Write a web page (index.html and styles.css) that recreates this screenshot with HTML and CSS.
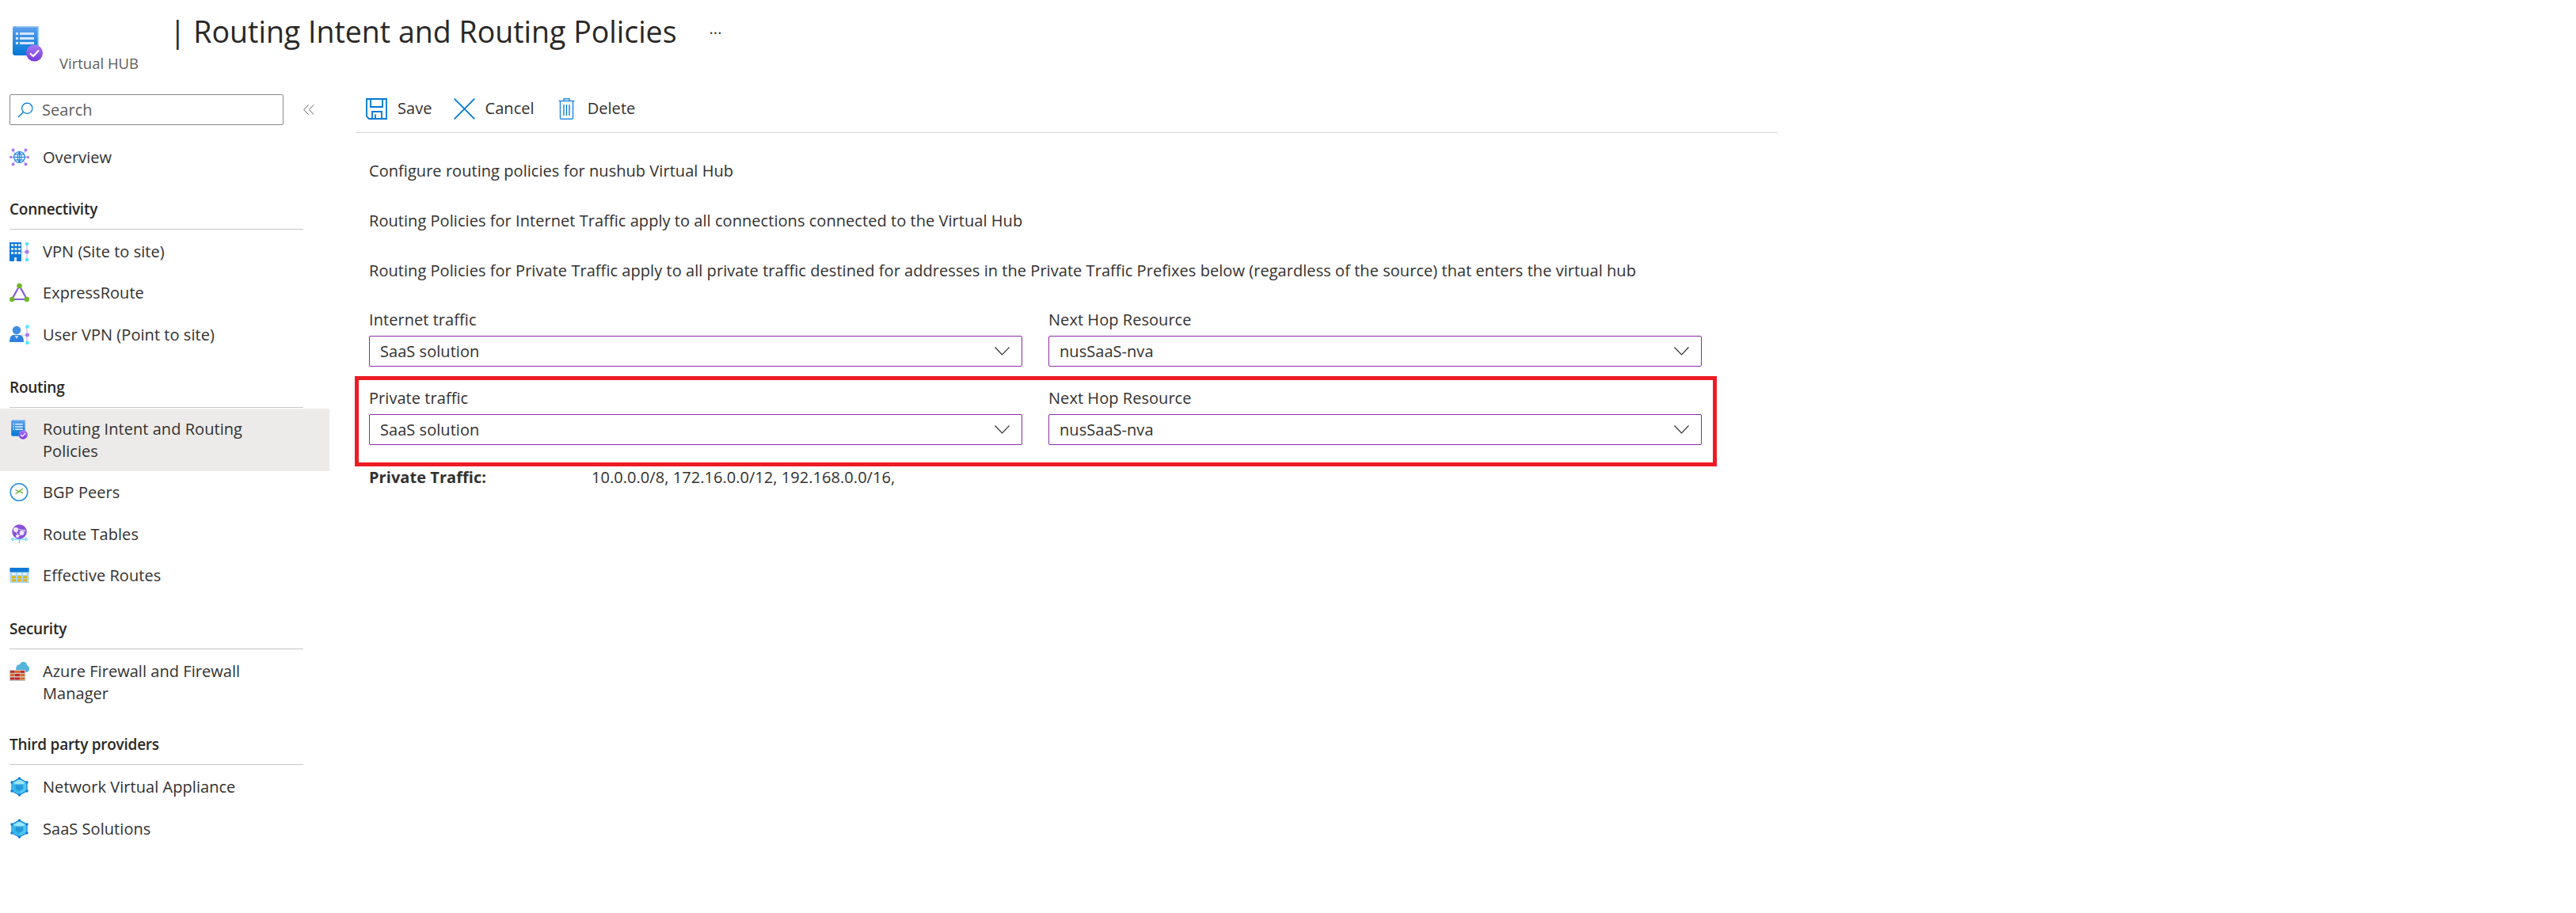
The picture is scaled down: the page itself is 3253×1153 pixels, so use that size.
FILE: index.html
```html
<!DOCTYPE html>
<html lang="en">
<head>
<meta charset="utf-8">
<title>Routing Intent and Routing Policies</title>
<link rel="stylesheet" href="styles.css">
</head>
<body>
<svg class="defs" width="0" height="0" aria-hidden="true">
  <defs>
    <linearGradient id="bookG" x1="0" y1="0" x2="0" y2="1"><stop offset="0" stop-color="#5ea0ef"/><stop offset="1" stop-color="#0078d4"/></linearGradient>
    <linearGradient id="checkG" x1="0" y1="0" x2="0" y2="1"><stop offset="0" stop-color="#a67af4"/><stop offset="1" stop-color="#773adc"/></linearGradient>
    <symbol id="book" viewBox="0 0 38 46">
      <path d="M3 1 H33 V38 H3 Q0 38 0 35 V4 Q0 1 3 1Z" fill="url(#bookG)"/>
      <path d="M3 1 H33 V38 H31.5 V2.500 H4.500 Z" fill="#9fcdf5"/>
      <g fill="#d4e6fa"><rect x="4" y="9" width="3" height="3"/><rect x="9" y="9" width="18" height="3"/><rect x="4" y="15" width="3" height="3"/><rect x="9" y="15" width="18" height="3"/><rect x="4" y="21" width="3" height="3"/><rect x="9" y="21" width="18" height="3"/></g>
      <circle cx="27.500" cy="35" r="10.500" fill="url(#checkG)"/>
      <path d="M22 35.500 L26 39 L33 31.500" fill="none" stroke="#fff" stroke-width="2.200"/>
    </symbol>
    <symbol id="cube" viewBox="0 0 25 25">
      <path d="M12.500 2 L22 7 V18 L12.500 23 L3 18 V7Z" fill="#50c7ee" stroke="#0f7fe0" stroke-width="1.200"/>
      <path d="M12.500 3.500 L20 7.500 L12.500 11.500 L5 7.500Z" fill="#9ce6f8"/>
      <path d="M5 9 L12.500 13 V21 L5 17Z" fill="#32b4e4"/>
      <path d="M8 9.500 L17 9.500 L17.500 15 L12.500 18 L8 15Z" fill="#1a8fd6" opacity=".8"/>
      <g fill="#0f78dc"><circle cx="12.500" cy="2" r="1.700"/><circle cx="22" cy="7" r="1.700"/><circle cx="22" cy="18" r="1.700"/><circle cx="12.500" cy="23" r="1.700"/><circle cx="3" cy="18" r="1.700"/><circle cx="3" cy="7" r="1.700"/></g>
    </symbol>
    <symbol id="chev" viewBox="0 0 19 11"><path d="M.5 .5 L9.500 10 L18.500 .5" fill="none" stroke="#323130" stroke-width="1.200"/></symbol>
  </defs>
</svg>

<header class="page-head">
  <svg class="head-icon"><use href="#book"/></svg>
  <h1 class="title">| Routing Intent and Routing Policies</h1>
  <span class="more">···</span>
  <div class="subtitle">Virtual HUB</div>
</header>

<div class="app">
  <nav class="sidebar">
    <div class="search-row">
      <div class="search">
        <svg class="search-icon" viewBox="0 0 22 22"><circle cx="13.500" cy="8.500" r="7.300" fill="none" stroke="#0078d4" stroke-width="1.300"/><path d="M8.300 13.700 L1 21" stroke="#0078d4" stroke-width="1.500"/></svg>
        <span class="placeholder">Search</span>
      </div>
      <svg class="collapse" viewBox="0 0 14 13"><path d="M6.500 .5 L.8 6.500 L6.500 12.500 M13 .5 L7.300 6.500 L13 12.500" fill="none" stroke="#605e5c" stroke-width="1"/></svg>
    </div>

    <a class="item first">
      <svg class="ico" viewBox="0 0 25 25">
        <g stroke="#b796f9" stroke-width="1"><path d="M4 4 L21 21 M21 4 L4 21 M1 12.500 H24"/></g>
        <g fill="#a67af4"><circle cx="4.500" cy="3.500" r="2"/><circle cx="20.500" cy="3.500" r="2"/><circle cx="4.500" cy="21.500" r="2"/><circle cx="20.500" cy="21.500" r="2"/><circle cx="1.800" cy="12.500" r="1.800"/><circle cx="23.200" cy="12.500" r="1.800"/></g>
        <circle cx="12.500" cy="12.500" r="7" fill="#e6f2fc" stroke="#1a7fe0" stroke-width="1.200"/>
        <path d="M5.500 12.500 H19.500 M6.500 9 H18.500 M6.500 16 H18.500 M12.500 5.500 V19.500 M12.500 5.500 Q7.500 12.500 12.500 19.500 M12.500 5.500 Q17.500 12.500 12.500 19.500" fill="none" stroke="#1a7fe0" stroke-width="1"/>
      </svg>
      <span>Overview</span>
    </a>

    <h2 class="section">Connectivity</h2>
    <a class="item">
      <svg class="ico" viewBox="0 0 25 25">
        <path d="M0 1 H15 V25 H0Z" fill="#0f78d8"/>
        <g fill="#d8ecfc"><rect x="2" y="3" width="3" height="3"/><rect x="6.500" y="3" width="3" height="3"/><rect x="11" y="3" width="3" height="3"/><rect x="2" y="8" width="3" height="3"/><rect x="6.500" y="8" width="3" height="3"/><rect x="11" y="8" width="3" height="3"/><rect x="2" y="13" width="3" height="3"/><rect x="6.500" y="13" width="3" height="3"/><rect x="11" y="13" width="3" height="3"/><rect x="6" y="20" width="3" height="5"/></g>
        <path d="M15 13 H22 M22 3 V22" stroke="#c3c1d6" stroke-width="1.200"/>
        <circle cx="22" cy="3" r="2.300" fill="#50e6ff"/><circle cx="22" cy="13" r="2.500" fill="#a67af4"/><circle cx="22" cy="23" r="2.300" fill="#50e6ff"/>
      </svg>
      <span>VPN (Site to site)</span>
    </a>
    <a class="item">
      <svg class="ico" viewBox="0 0 25 25">
        <path d="M12.500 4 L3 21 H22Z" fill="none" stroke="#8c5be0" stroke-width="2.200"/>
        <circle cx="12.500" cy="4" r="3.300" fill="#6fb82a"/><circle cx="3.200" cy="21" r="3.200" fill="#6fb82a"/><circle cx="21.800" cy="21" r="3.200" fill="#6fb82a"/>
      </svg>
      <span>ExpressRoute</span>
    </a>
    <a class="item">
      <svg class="ico" viewBox="0 0 25 25">
        <path d="M15 13 H22 M22 2 V22" stroke="#c3c1d6" stroke-width="1.200"/>
        <circle cx="9" cy="7" r="5.300" fill="#3f8fe6"/>
        <path d="M0 22 Q0 13.500 5 13 H13 Q18 13.500 18 22Z" fill="#2f80e0"/>
        <path d="M6.500 14 L9 18 L11.500 14Z" fill="#bcdcf8"/>
        <circle cx="22.500" cy="2.500" r="2.300" fill="#50e6ff"/><circle cx="22.500" cy="13" r="2.500" fill="#a67af4"/><circle cx="22.500" cy="23" r="2.300" fill="#50e6ff"/>
      </svg>
      <span>User VPN (Point to site)</span>
    </a>

    <h2 class="section flush">Routing</h2>
    <a class="item wrap selected">
      <svg class="ico book-small"><use href="#book"/></svg>
      <span>Routing Intent and Routing Policies</span>
    </a>
    <a class="item">
      <svg class="ico" viewBox="0 0 25 25">
        <circle cx="12" cy="12.500" r="10.800" fill="#fff" stroke="#2a8fe0" stroke-width="1.500"/>
        <path d="M7.500 9.500 L12 12 L7.500 14.500" fill="none" stroke="#59a82a" stroke-width="1.200"/>
        <path d="M17 8 L12.500 11 L17 14" fill="none" stroke="#59a82a" stroke-width="1.200"/>
      </svg>
      <span>BGP Peers</span>
    </a>
    <a class="item">
      <svg class="ico" viewBox="0 0 25 25">
        <path d="M4 19 H21 M12.500 17 V24 M2 19 L5 17 M2 19 L5 21 M23 19 L20 17 M23 19 L20 21" stroke="#6fdcf8" stroke-width="1.500" fill="none"/>
        <circle cx="12.500" cy="9.500" r="9.300" fill="#8a52dc"/>
        <path d="M5 5 L20 8 L12 15 Z" fill="none" stroke="#e2d4fa" stroke-width="1"/>
        <circle cx="15.500" cy="11" r="3" fill="#efe8fc"/><circle cx="8" cy="7" r="3" fill="#efe8fc"/><circle cx="10" cy="15" r="2" fill="#efe8fc"/>
      </svg>
      <span>Route Tables</span>
    </a>
    <a class="item">
      <svg class="ico" viewBox="0 0 25 25">
        <rect x="0.500" y="3" width="24" height="19" fill="#a9d4f5"/>
        <rect x="0.500" y="3" width="24" height="5.500" fill="#0f78d8"/>
        <g fill="#eef4fb"><rect x="3" y="9.500" width="5" height="2.500"/><rect x="10" y="9.500" width="5" height="2.500"/><rect x="17" y="9.500" width="5" height="2.500"/></g>
        <g fill="#e3b500"><rect x="3" y="13.500" width="5" height="2.800"/><rect x="10" y="13.500" width="5" height="2.800"/><rect x="17" y="13.500" width="5" height="2.800"/><rect x="3" y="17.500" width="5" height="3"/><rect x="10" y="17.500" width="5" height="3"/><rect x="17" y="17.500" width="5" height="3"/></g>
      </svg>
      <span>Effective Routes</span>
    </a>

    <h2 class="section">Security</h2>
    <a class="item wrap">
      <svg class="ico" viewBox="0 0 25 25">
        <path d="M8 11 Q8 4 13 4 Q15 0 19 1 Q22 2 22 5 Q25 6 25 10 Q25 14 20 14 H8Z" fill="#55b3dc"/>
        <rect x="0" y="11" width="20" height="14" fill="#c8c6c4"/>
        <g fill="#c3262b"><rect x="1" y="12" width="5.500" height="2.800"/><rect x="13.500" y="12" width="5.500" height="2.800"/><rect x="1" y="20.500" width="5.500" height="3"/><rect x="7" y="20.500" width="6" height="3"/><rect x="7" y="16" width="6" height="3"/></g>
        <g fill="#e06a1e"><rect x="7" y="12" width="6" height="2.800"/><rect x="1" y="16" width="5.500" height="3"/><rect x="13.500" y="16" width="5.500" height="3"/><rect x="13.500" y="20.500" width="5.500" height="3"/></g>
      </svg>
      <span>Azure Firewall and Firewall Manager</span>
    </a>

    <h2 class="section">Third party providers</h2>
    <a class="item">
      <svg class="ico"><use href="#cube"/></svg>
      <span>Network Virtual Appliance</span>
    </a>
    <a class="item">
      <svg class="ico"><use href="#cube"/></svg>
      <span>SaaS Solutions</span>
    </a>
  </nav>

  <main class="main">
    <div class="toolbar">
      <button class="tool">
        <svg class="tool-ico" viewBox="0 0 27 27"><path d="M1 1 H26 V26 H4 L1 23Z M6 1 V11 H21 V1 M8 26 V17 H20 V26 M12 20.500 V26" fill="none" stroke="#0078d4" stroke-width="1.800"/></svg>
        <span>Save</span>
      </button>
      <button class="tool">
        <svg class="tool-ico" viewBox="0 0 27 27"><path d="M.7 .7 L26.300 26.300 M26.300 .7 L.7 26.300" fill="none" stroke="#0078d4" stroke-width="1.700"/></svg>
        <span>Cancel</span>
      </button>
      <button class="tool">
        <svg class="tool-ico trash" viewBox="0 0 21 27"><path d="M.5 3.500 H20.500 M7 3.500 V.8 H14 V3.500 M2.500 3.500 V25 Q2.500 26.300 4 26.300 H17 Q18.500 26.300 18.500 25 V3.500" fill="none" stroke="#2a8de0" stroke-width="1.500"/><path d="M7 8 V22 M10.500 8 V22 M14 8 V22" stroke="#0078d4" stroke-width="1.300"/></svg>
        <span>Delete</span>
      </button>
    </div>

    <p class="para">Configure routing policies for nushub Virtual Hub</p>
    <p class="para">Routing Policies for Internet Traffic apply to all connections connected to the Virtual Hub</p>
    <p class="para">Routing Policies for Private Traffic apply to all private traffic destined for addresses in the Private Traffic Prefixes below (regardless of the source) that enters the virtual hub</p>

    <section class="form-row plain">
      <div class="field">
        <label class="label">Internet traffic</label>
        <div class="select"><span>SaaS solution</span><svg class="chev"><use href="#chev"/></svg></div>
      </div>
      <div class="field">
        <label class="label">Next Hop Resource</label>
        <div class="select"><span>nusSaaS-nva</span><svg class="chev"><use href="#chev"/></svg></div>
      </div>
    </section>

    <section class="form-row marked">
      <div class="field">
        <label class="label">Private traffic</label>
        <div class="select"><span>SaaS solution</span><svg class="chev"><use href="#chev"/></svg></div>
      </div>
      <div class="field">
        <label class="label">Next Hop Resource</label>
        <div class="select"><span>nusSaaS-nva</span><svg class="chev"><use href="#chev"/></svg></div>
      </div>
    </section>

    <div class="prefixes">
      <strong class="prefix-key">Private Traffic:</strong>
      <span>10.0.0.0/8, 172.16.0.0/12, 192.168.0.0/16,</span>
    </div>
  </main>
</div>
</body>
</html>
```
FILE: styles.css
```css
* { box-sizing: border-box; }
html, body { margin: 0; padding: 0; background: #fff; }
body {
  font-family: "Open Sans", "Noto Sans", "Liberation Sans", sans-serif;
  font-size: 20px;
  line-height: 28px;
  color: #323130;
  letter-spacing: 0.05px;
  width: 3253px;
  height: 1153px;
  overflow: hidden;
}
.defs { position: absolute; }

.page-head {
  display: grid;
  grid-template-columns: 59px 139px auto auto 1fr;
  grid-template-rows: 70px 28px;
  height: 98px;
  padding-left: 16px;
}
.head-icon { grid-row: 1 / 3; width: 38px; height: 46px; margin-top: 32px; grid-column: 1; }
.title {
  grid-column: 3; grid-row: 1;
  margin: 16px 0 0;
  font-size: 37.5px; font-weight: 400; line-height: 48px; color: #292827;
  letter-spacing: 0;
}
.more { grid-column: 4; grid-row: 1; margin: 28px 0 0 41px; font-size: 20px; line-height: 28px; }
.subtitle { grid-column: 2 / 4; grid-row: 2; font-size: 18.5px; letter-spacing: 0; color: #605e5c; line-height: 20px; }

.app { display: flex; }
.sidebar { width: 416px; flex: none; }
.search-row { display: flex; align-items: center; padding: 21px 0 0 12px; }
.search {
  width: 346px; height: 39px;
  display: flex; align-items: center; gap: 11px;
  padding-left: 9px;
  border: 1px solid #8a8886; border-radius: 2px;
  color: #605e5c;
}
.search-icon { width: 20px; height: 20px; }
.collapse { width: 14px; height: 13px; margin-left: 25px; }

.item {
  display: flex; align-items: flex-start; gap: 17px;
  padding: 12px 60px 12px 12px;
  height: 52.500px;
}
.item.first { margin-top: 15px; margin-bottom: -2px; }
.item.wrap { height: auto; padding-bottom: 10.500px; }
.ico { width: 25px; height: 25px; flex: none; margin-top: 1px; }
.item.selected { background: #edebe9; padding-bottom: 11px; margin-bottom: 1px; }
.book-small { margin-top: 2px; }

.section {
  margin: 26px 33px 2px 12px;
  height: 40px;
  font-size: 19px; font-weight: 600; line-height: 28px; color: #292827;
  letter-spacing: -0.25px;
  border-bottom: 1px solid #c8c6c4;
}
.section.flush { margin-bottom: 1px; }

.main { flex: none; width: 1796px; margin-left: 33px; }
.toolbar {
  display: flex; align-items: center; gap: 27px;
  height: 56px; margin-top: 14px; padding: 0 0 5px 13px;
  border-bottom: 1px solid #d6d6d6;
}
.tool {
  display: flex; align-items: center; gap: 13px;
  padding: 0; border: 0; background: none;
  font: inherit; letter-spacing: inherit; color: inherit;
}
.tool-ico { width: 27px; height: 27px; }
.tool-ico.trash { width: 21px; margin: 0 3px; }

.para { margin: 0 0 35px 17px; }
.para:first-of-type { margin-top: 34px; }

.form-row { display: grid; grid-template-columns: 825px 825px; column-gap: 33px; margin-left: 17px; }
.plain { margin-top: -1px; }
.marked {
  margin: 12px 0 0 -1px;
  width: 1720px;
  padding: 9px 14px 22px 13px;
  border: 5px solid #ed1c24;
}
.label { display: block; height: 34px; }
.select {
  height: 39px;
  display: flex; align-items: center; justify-content: space-between;
  padding: 0 15px 0 13px;
  border: 1px solid #8c2ba8; border-radius: 2px;
}
.chev { width: 19px; height: 11px; }

.prefixes { display: flex; margin: 0 0 0 17px; }
.prefix-key { width: 281px; font-weight: 700; }
```
